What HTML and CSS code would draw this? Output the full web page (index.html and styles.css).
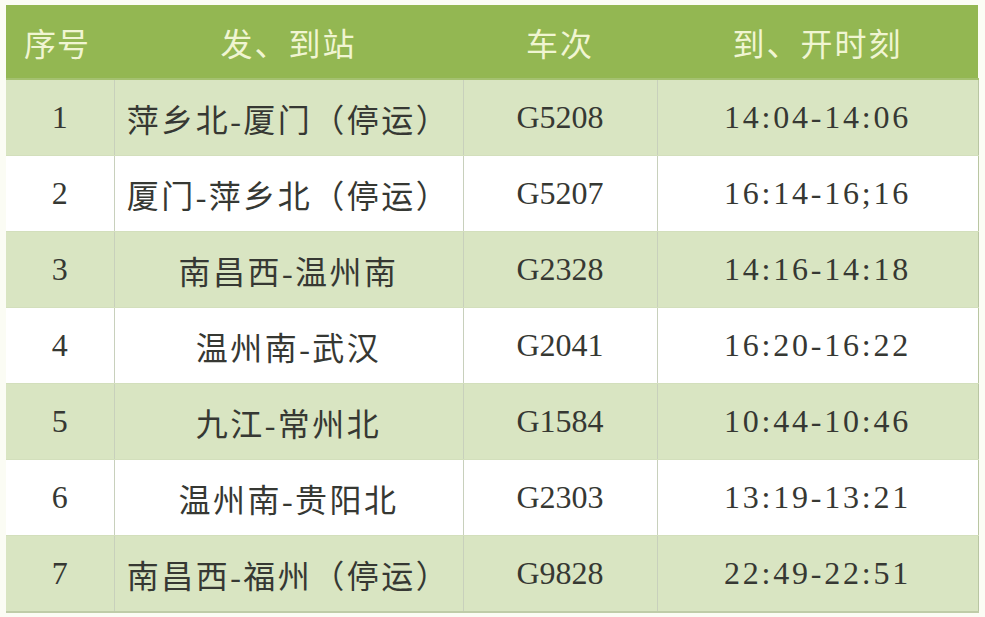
FILE: index.html
```html
<!DOCTYPE html>
<html lang="zh">
<head>
<meta charset="utf-8">
<link rel="stylesheet" href="styles.css">
</head>
<body>
<div class="wrap">
<table class="schedule">
  <colgroup>
    <col class="c1"><col class="c2"><col class="c3"><col class="c4">
  </colgroup>
  <thead>
    <tr><th>序号</th><th>发、到站</th><th>车次</th><th>到、开时刻</th></tr>
  </thead>
  <tbody>
    <tr class="alt"><td>1</td><td class="route">萍乡北-厦门（停运）</td><td>G5208</td><td class="time">14:04-14:06</td></tr>
    <tr><td>2</td><td class="route">厦门-萍乡北（停运）</td><td>G5207</td><td class="time">16:14-16;16</td></tr>
    <tr class="alt"><td>3</td><td class="route">南昌西-温州南</td><td>G2328</td><td class="time">14:16-14:18</td></tr>
    <tr><td>4</td><td class="route">温州南-武汉</td><td>G2041</td><td class="time">16:20-16:22</td></tr>
    <tr class="alt"><td>5</td><td class="route">九江-常州北</td><td>G1584</td><td class="time">10:44-10:46</td></tr>
    <tr><td>6</td><td class="route">温州南-贵阳北</td><td>G2303</td><td class="time">13:19-13:21</td></tr>
    <tr class="alt"><td>7</td><td class="route">南昌西-福州（停运）</td><td>G9828</td><td class="time">22:49-22:51</td></tr>
  </tbody>
</table>
</div>
</body>
</html>
```

FILE: styles.css
```css
html, body {
  margin: 0;
  padding: 0;
  background: #fbfcf4;
}
.wrap {
  padding: 5px 0 0 6px;
}
.schedule {
  border-collapse: collapse;
  table-layout: fixed;
  width: 972px;
  font-family: "Liberation Serif", "Noto Sans CJK SC", serif;
  font-size: 32px;
  color: #363833;
}
.c1 { width: 108px; }
.c2 { width: 349px; }
.c3 { width: 194px; }
.c4 { width: 321px; }
.schedule th {
  height: 73px;
  padding: 0;
  background: #93b752;
  color: #f0f5d2;
  font-weight: normal;
  font-family: "Noto Sans CJK SC", serif;
  font-size: 32px;
  letter-spacing: 2px;
  text-align: center;
  border-bottom: 2px solid #a4c170;
}
.schedule th:first-child {
  text-align: left;
  padding-left: 18px;
  letter-spacing: 1px;
}
.schedule td {
  height: 75px;
  padding: 0;
  text-align: center;
  background: #ffffff;
  border-right: 1px solid #c8d0bc;
  border-bottom: 1px solid #d3dfbc;
}
.schedule td:last-child {
  border-right: 1px solid #b9c6a2;
}
.schedule td.route {
  font-size: 32px;
  letter-spacing: 2.5px;
}
.schedule td.time {
  letter-spacing: 2.8px;
}
.schedule tr.alt td {
  background: #d9e5c2;
}
.schedule tbody tr:last-child td {
  border-bottom: 2px solid #bfcca8;
}
```
